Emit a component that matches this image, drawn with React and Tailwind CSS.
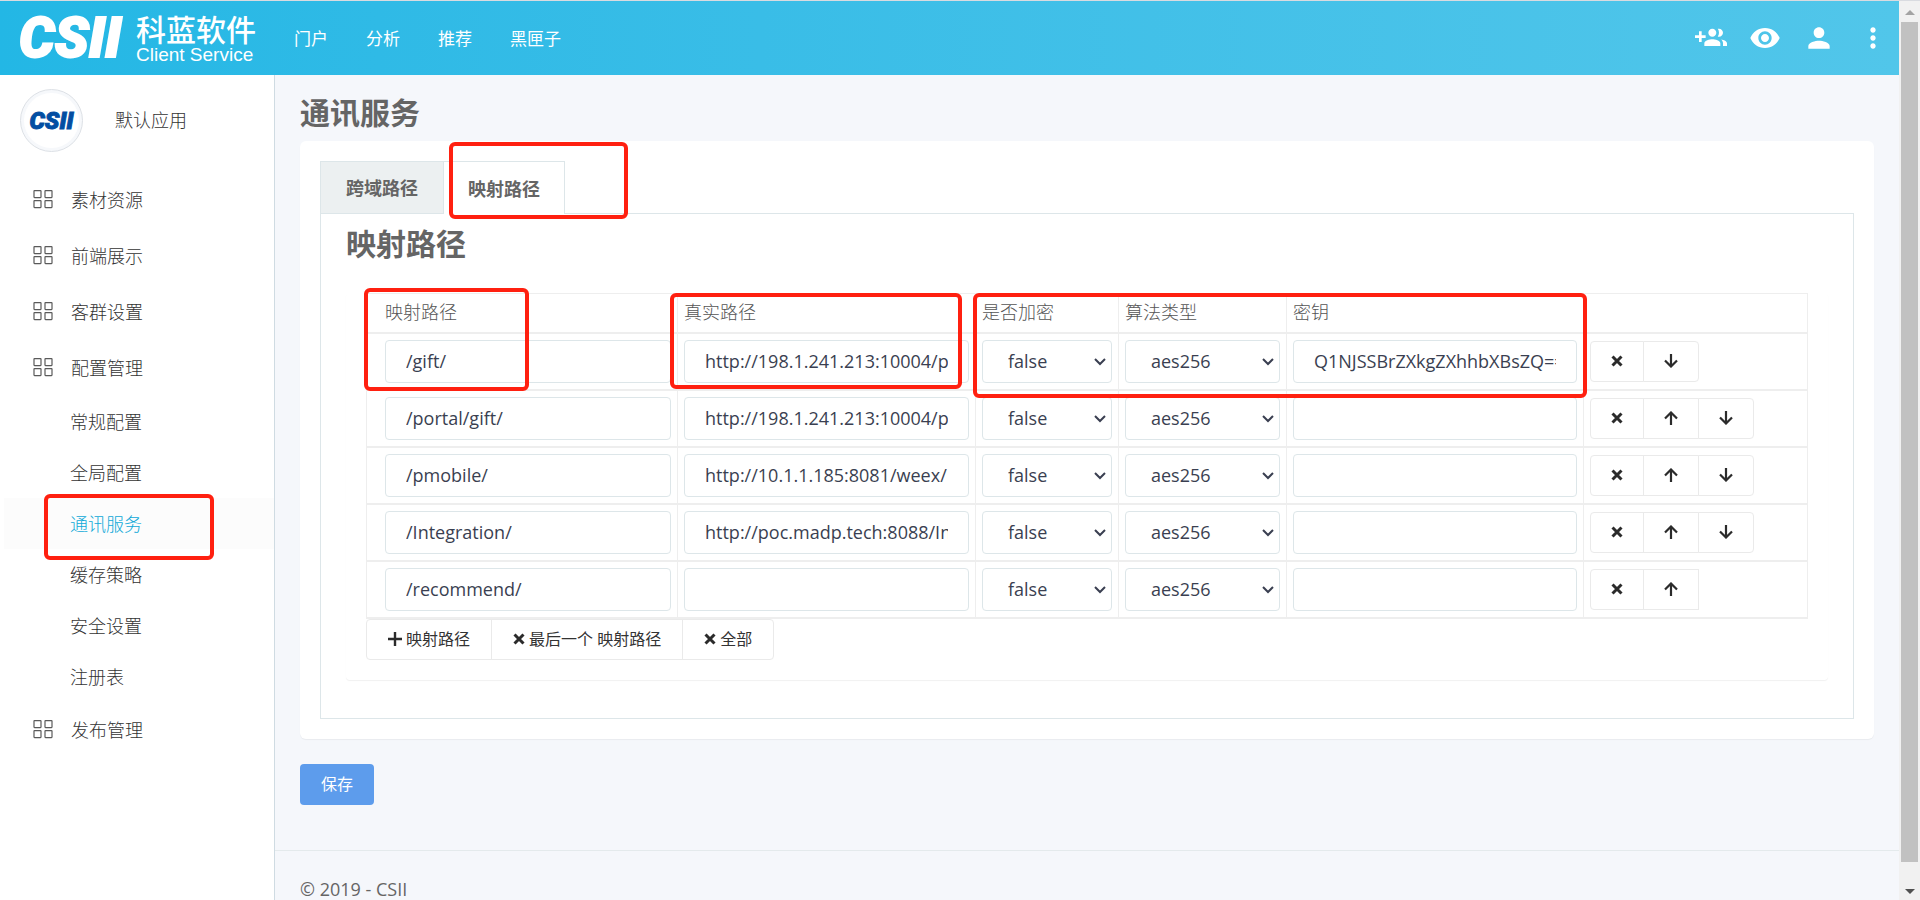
import React, { useState } from 'react';
import { MdRemoveRedEye, MdPerson, MdMoreVert } from 'react-icons/md';

const navLinks = ['门户', '分析', '推荐', '黑匣子'];

const subMenu = ['常规配置', '全局配置', '通讯服务', '缓存策略', '安全设置', '注册表'];

const menu = [
  { name: '素材资源' },
  { name: '前端展示' },
  { name: '客群设置' },
  { name: '配置管理', children: subMenu },
  { name: '发布管理' },
];

const initialRows = [
  { path: '/gift/', real: 'http://198.1.241.213:10004/portal/', key: 'Q1NJSSBrZXkgZXhhbXBsZQ==' },
  { path: '/portal/gift/', real: 'http://198.1.241.213:10004/portal/', key: '' },
  { path: '/pmobile/', real: 'http://10.1.1.185:8081/weex/', key: '' },
  { path: '/Integration/', real: 'http://poc.madp.tech:8088/Integration/', key: '' },
  { path: '/recommend/', real: '', key: '' },
];

const inputClass =
  'block w-full h-[43px] px-5 rounded border border-[#dde6e9] bg-white text-[18px] text-[#3a3f51] outline-none';

function GroupAddIcon() {
  return (
    <svg viewBox="0 0 24 24" className="w-8 h-8" fill="currentColor" aria-hidden="true">
      <path d="M8 10H5V7H3v3H0v2h3v3h2v-3h3v-2zm10 1c1.66 0 2.99-1.34 2.99-3S19.66 5 18 5c-.32 0-.63.05-.91.14.57.81.9 1.79.9 2.86s-.34 2.04-.9 2.86c.28.09.59.14.91.14zm-5 0c1.66 0 2.99-1.34 2.99-3S14.66 5 13 5c-1.66 0-3 1.34-3 3s1.34 3 3 3zm6.62 2.16c.83.73 1.38 1.66 1.38 2.84v2h3v-2c0-1.54-2.37-2.49-4.38-2.84zM13 13c-2 0-6 1-6 3v2h12v-2c0-2-4-3-6-3z" />
    </svg>
  );
}

function GridIcon() {
  return (
    <svg viewBox="0 0 20 20" className="w-5 h-5 shrink-0" fill="none" stroke="#5a5a5a" strokeWidth="1.2" aria-hidden="true">
      <rect x="1" y="0.6" width="7" height="7" rx="0.5" />
      <rect x="12" y="0.6" width="7" height="7" rx="0.5" />
      <rect x="1" y="10.6" width="7" height="7" rx="0.5" />
      <rect x="12" y="10.6" width="7" height="7" rx="0.5" />
    </svg>
  );
}

function CrossIcon() {
  return (
    <svg viewBox="0 0 12 12" className="w-3 h-3 shrink-0" fill="none" stroke="#2b2b2b" strokeWidth="3" aria-hidden="true">
      <path d="M1.5 1.5 10.5 10.5M10.5 1.5 1.5 10.5" />
    </svg>
  );
}

function PlusIcon() {
  return (
    <svg viewBox="0 0 14 14" className="w-[14px] h-[14px] shrink-0" fill="none" stroke="#2b2b2b" strokeWidth="2.4" aria-hidden="true">
      <path d="M7 0V14M0 7H14" />
    </svg>
  );
}

function ArrowIcon({ up }) {
  return (
    <svg viewBox="0 0 14 14" className="w-[14px] h-[14px] shrink-0" fill="none" stroke="#2b2b2b" strokeWidth="2.2" aria-hidden="true">
      <path d={up ? 'M7 14V2M1 7.5 7 1.5 13 7.5' : 'M7 0V12M1 6.5 7 12.5 13 6.5'} />
    </svg>
  );
}

// red outline laid over the parts being pointed out
function Mark({ className }) {
  return (
    <span className={`absolute z-10 rounded-md border-4 border-[#ff2010] pointer-events-none ${className}`} />
  );
}

function SelectBox({ label, options }) {
  return (
    <div className="relative">
      <select aria-label={label} className={`${inputClass} appearance-none pl-[25px]`}>
        {options.map((o) => (
          <option key={o}>{o}</option>
        ))}
      </select>
      <svg
        viewBox="0 0 12 8"
        className="absolute right-[6px] top-[18px] w-3 h-2 pointer-events-none"
        fill="none"
        stroke="#3a3f51"
        strokeWidth="2"
        aria-hidden="true"
      >
        <path d="M1 1 6 6 11 1" />
      </svg>
    </div>
  );
}

function Header() {
  return (
    <header className="flex items-center h-[74px] shrink-0 pl-[19px] pr-[10px] bg-linear-to-r from-[#23b7e5] to-[#51c6ea] text-white">
      <a href="#" className="flex items-center">
        <span className="w-[117px] font-['Roboto'] text-[56px] leading-[64px] font-black italic [-webkit-text-stroke:2px_white]">CSII</span>
        <span className="flex flex-col">
          <span className="text-[30px] leading-[34px] font-medium">科蓝软件</span>
          <span className="font-['Liberation_Sans'] text-[19px] leading-[16px]">Client Service</span>
        </span>
      </a>
      <nav className="flex gap-[38px] ml-[38px] pt-0.5 text-[17px]">
        {navLinks.map((n) => (
          <a key={n} href="#">{n}</a>
        ))}
      </nav>
      <div className="flex items-center gap-[22px] ml-auto">
        <button aria-label="添加用户"><GroupAddIcon /></button>
        <button aria-label="预览"><MdRemoveRedEye className="w-8 h-8" /></button>
        <button aria-label="用户"><MdPerson className="w-8 h-8" /></button>
        <button aria-label="更多"><MdMoreVert className="w-8 h-8" /></button>
      </div>
    </header>
  );
}

function Sidebar() {
  return (
    <aside className="w-[275px] shrink-0 border-r border-[#cfdbe2] bg-white text-[18px] text-[#333333] font-light">
      <div className="flex items-center gap-8 h-[97px] pl-5 pb-1.5">
        <div className="flex items-center justify-center w-[63px] h-[63px] rounded-full border border-[#dde1e6] bg-[#f6f8fb] p-[3px]">
          <div className="flex items-center justify-center w-full h-full rounded-full bg-white font-['Roboto'] text-[24px] leading-[30px] font-black italic text-[#034ea2] [-webkit-text-stroke:1px_#034ea2]">
            CSII
          </div>
        </div>
        <span>默认应用</span>
      </div>
      <ul>
        {menu.map((m) => (
          <li key={m.name}>
            <a href="#" className="flex items-center gap-[18px] h-14 pl-[33px]">
              <GridIcon />
              {m.name}
            </a>
            {m.children && (
              <ul>
                {m.children.map((c) => (
                  <li key={c} className="relative pl-1">
                    <a
                      href="#"
                      className={`flex items-center h-[51px] pt-0.5 pl-[66px] ${c === '通讯服务' ? 'bg-[#fcfcfc] text-[#0fa9d8]' : ''}`}
                    >
                      {c}
                    </a>
                    {c === '通讯服务' && <Mark className="left-11 -top-1 w-[170px] h-[66px]" />}
                  </li>
                ))}
              </ul>
            )}
          </li>
        ))}
      </ul>
    </aside>
  );
}

function PathTable() {
  const [rows, setRows] = useState(initialRows);

  const update = (i, field, value) =>
    setRows(rows.map((r, n) => (n === i ? { ...r, [field]: value } : r)));

  const remove = (i) => setRows(rows.filter((_, n) => n !== i));

  const move = (i, to) => {
    const next = [...rows];
    [next[i], next[to]] = [next[to], next[i]];
    setRows(next);
  };

  const iconButton = 'flex items-center justify-center h-[41px] border border-[#eaeaea] bg-white -ml-px';
  const textButton = 'flex items-center gap-1 h-[41px] px-[21px] border border-[#eaeaea]';

  return (
    <div className="mt-[27px] rounded pl-5 pr-5 pb-5 shadow-[0_1px_1px_rgba(0,0,0,0.06)]">
      <table className="w-full table-fixed border-collapse border border-[#eeeeee] text-left">
        <thead>
          <tr className="h-[39px] text-[18px] text-[#555555] border-b-2 border-[#eeeeee]">
            <th className="relative w-[311px] pl-[18px] font-light">
              映射路径
              <Mark className="-left-[3px] -top-[6px] w-[165px] h-[103px]" />
            </th>
            <th className="relative w-[298px] border-l border-[#eeeeee] pl-[6px] font-light">
              真实路径
              <Mark className="-left-2 -top-px w-[292px] h-24" />
            </th>
            <th className="relative w-[143px] border-l border-[#eeeeee] pl-[6px] font-light">
              是否加密
              <Mark className="-left-[3px] -top-px w-[614px] h-[105px]" />
            </th>
            <th className="w-[168px] border-l border-[#eeeeee] pl-[6px] font-light">算法类型</th>
            <th className="w-[297px] border-l border-[#eeeeee] pl-[6px] font-light">密钥</th>
            <th></th>
          </tr>
        </thead>
        <tbody>
          {rows.map((r, i) => (
            <tr key={i} className="h-[57px] border-b-2 border-[#eeeeee]">
              <td className="pl-[18px] pr-[6px]">
                <input aria-label="映射路径" className={inputClass} value={r.path} onChange={(e) => update(i, 'path', e.target.value)} />
              </td>
              <td className="border-l border-[#eeeeee] px-[6px]">
                <input aria-label="真实路径" className={inputClass} value={r.real} onChange={(e) => update(i, 'real', e.target.value)} />
              </td>
              <td className="border-l border-[#eeeeee] px-[6px]">
                <SelectBox label="是否加密" options={['false', 'true']} />
              </td>
              <td className="border-l border-[#eeeeee] px-[6px]">
                <SelectBox label="算法类型" options={['aes256', 'aes128']} />
              </td>
              <td className="border-l border-[#eeeeee] px-[6px]">
                <input aria-label="密钥" className={inputClass} value={r.key} onChange={(e) => update(i, 'key', e.target.value)} />
              </td>
              <td className="border-l border-[#eeeeee] pl-[7px]">
                <div className="flex">
                  <button className={`${iconButton} w-[54px] rounded-l`} aria-label="删除" onClick={() => remove(i)}>
                    <CrossIcon />
                  </button>
                  {i > 0 && (
                    <button className={`${iconButton} w-14`} aria-label="上移" onClick={() => move(i, i - 1)}>
                      <ArrowIcon up />
                    </button>
                  )}
                  {i < rows.length - 1 && (
                    <button className={`${iconButton} w-14 rounded-r`} aria-label="下移" onClick={() => move(i, i + 1)}>
                      <ArrowIcon />
                    </button>
                  )}
                </div>
              </td>
            </tr>
          ))}
        </tbody>
      </table>
      <div className="flex text-[16px] text-[#333333]">
        <button className={`${textButton} rounded-l`} onClick={() => setRows([...rows, { path: '', real: '', key: '' }])}>
          <PlusIcon />映射路径
        </button>
        <button className={`${textButton} -ml-px`} onClick={() => setRows(rows.slice(0, -1))}>
          <CrossIcon />最后一个 映射路径
        </button>
        <button className={`${textButton} -ml-px rounded-r`} onClick={() => setRows([])}>
          <CrossIcon />全部
        </button>
      </div>
    </div>
  );
}

export default function App() {
  return (
    <div className="flex h-screen overflow-hidden border-t border-[#d9dbe0] bg-[#f5f7fa] font-['Open_Sans','Noto_Sans_CJK_SC',sans-serif]">
      <div className="flex flex-col flex-1 min-w-0">
        <Header />
        <div className="flex flex-1 min-h-0">
          <Sidebar />
          <div className="flex-1 min-w-0 bg-[#f5f7fb] text-[#656565]">
            <main className="pt-4 pl-[25px] pr-[25px]">
              <h1 className="text-[30px] leading-[44px] font-bold">通讯服务</h1>

              <section className="mt-[6px] rounded-md bg-white p-5 shadow-[0_1px_1px_rgba(0,0,0,0.05)]">
                <div className="relative flex text-[18px] font-bold" role="tablist">
                  <button role="tab" className="w-[124px] h-[53px] pt-0.5 border border-[#dde6e9] bg-[#ecf0f1]">跨域路径</button>
                  <button role="tab" className="w-[121px] h-[53px] pt-0.5 border border-l-0 border-b-0 border-[#dde6e9] bg-white">映射路径</button>
                  <div className="flex-1 border-b border-[#dde6e9]"></div>
                  <Mark className="left-[129px] -top-[19px] w-[179px] h-[77px]" />
                </div>

                <div className="border border-t-0 border-[#dde6e9] px-[25px] pt-2 pb-[38px]">
                  <h2 className="text-[30px] leading-[44px] font-bold">映射路径</h2>
                  <PathTable />
                </div>
              </section>

              <button className="mt-[25px] h-[41px] px-[21px] rounded bg-[#5d9cec] text-[16px] text-white">保存</button>
            </main>
            <footer className="mt-[45px] border-t border-[#e4eaec] px-[25px] pt-6 text-[18px] leading-[28px]">
              © 2019 - CSII
            </footer>
          </div>
        </div>
      </div>

      {/* scroll bar */}
      <div className="flex flex-col items-center w-[21px] shrink-0 bg-[#f1f1f1]">
        <svg viewBox="0 0 10 5" className="w-[10px] h-[5px] mt-[9px] mb-[7px]" fill="#a3a3a3" aria-hidden="true"><path d="M0 5 5 0 10 5Z" /></svg>
        <div className="flex-1 w-[17px] bg-[#c1c1c1]"></div>
        <svg viewBox="0 0 10 5" className="w-[10px] h-[5px] mt-[27px] mb-[6px]" fill="#505050" aria-hidden="true"><path d="M0 0 5 5 10 0Z" /></svg>
      </div>
    </div>
  );
}
